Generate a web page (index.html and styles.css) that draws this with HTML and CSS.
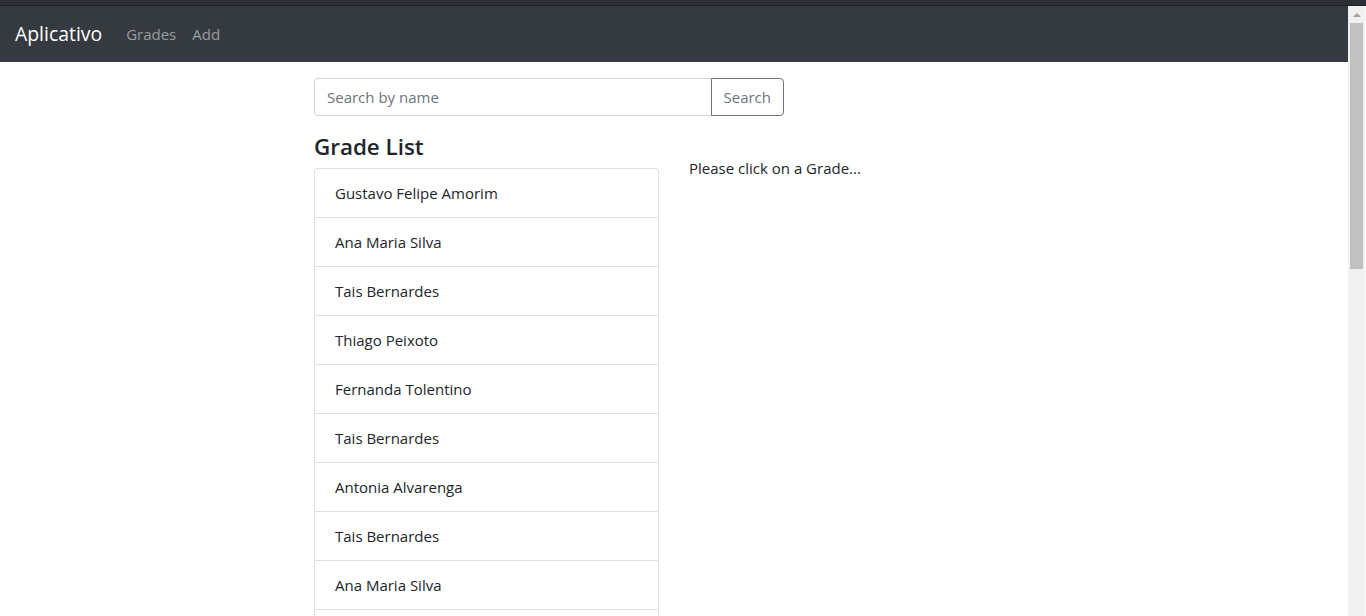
FILE: index.html
```html
<!DOCTYPE html>
<html lang="pt">
<head>
<meta charset="utf-8">
<title>Aplicativo</title>
<link rel="stylesheet" href="styles.css">
</head>
<body>
<div class="chrome-strip"></div>
<div class="viewport">
  <div class="page">
    <nav class="navbar">
      <a class="brand" href="#">Aplicativo</a>
      <a class="nav-link" href="#">Grades</a>
      <a class="nav-link" href="#">Add</a>
    </nav>
    <div class="container">
      <div class="list">
        <div class="col-8">
          <div class="input-group">
            <input class="form-control" type="text" placeholder="Search by name">
            <button class="btn-outline" type="button">Search</button>
          </div>
        </div>
        <div class="col-6">
          <h4 class="title">Grade List</h4>
          <ul class="list-group">
            <li class="list-item">Gustavo Felipe Amorim</li>
            <li class="list-item">Ana Maria Silva</li>
            <li class="list-item">Tais Bernardes</li>
            <li class="list-item">Thiago Peixoto</li>
            <li class="list-item">Fernanda Tolentino</li>
            <li class="list-item">Tais Bernardes</li>
            <li class="list-item">Antonia Alvarenga</li>
            <li class="list-item">Tais Bernardes</li>
            <li class="list-item">Ana Maria Silva</li>
            <li class="list-item">Gustavo Felipe Amorim</li>
          </ul>
        </div>
        <div class="col-6">
          <br>
          <p class="hint">Please click on a Grade...</p>
        </div>
      </div>
    </div>
  </div>
  <div class="scrollbar" aria-hidden="true">
    <div class="sb-button"><span class="sb-arrow"></span></div>
    <div class="sb-thumb"></div>
  </div>
</div>
</body>
</html>
```

FILE: styles.css
```css
* { box-sizing: border-box; }

html, body {
  margin: 0;
  padding: 0;
  height: 100%;
  overflow: hidden;
}

body {
  font-family: "Open Sans", "Noto Sans", "Liberation Sans", sans-serif;
  font-size: 15px;
  line-height: 24px;
  color: #212529;
  background: #fff;
  display: flex;
  flex-direction: column;
}

.chrome-strip {
  height: 6px;
  flex: none;
  background: #2c2f33;
  border-bottom: 1px solid #1f2124;
}

.viewport {
  flex: 1;
  min-height: 0;
  display: flex;
}

.page {
  flex: 1;
  min-width: 0;
  overflow: hidden;
}

.scrollbar {
  flex: 0 0 18px;
  background: #f1f1f1;
  display: flex;
  flex-direction: column;
  align-items: center;
  border-right: 1px solid #fafafa;
}

.sb-button {
  height: 17px;
  width: 100%;
  display: flex;
  align-items: center;
  justify-content: center;
}

.sb-arrow {
  width: 0;
  height: 0;
  border-left: 4px solid transparent;
  border-right: 4px solid transparent;
  border-bottom: 4px solid #a3a3a3;
}

.sb-thumb {
  width: 13px;
  height: 246px;
  background: #c1c1c1;
}

.navbar {
  display: flex;
  align-items: center;
  height: 56px;
  padding: 8px 16px 8px 15px;
  background: #343a40;
}

.brand {
  font-size: 19.4px;
  line-height: 30px;
  color: #fff;
  text-decoration: none;
  margin-right: 16px;
  padding: 5px 0;
}

.nav-link {
  color: rgba(255, 255, 255, 0.5);
  text-decoration: none;
  padding: 8px 8px;
  line-height: 24px;
}

.container {
  margin-top: 16px;
}

.list {
  max-width: 750px;
  margin: 0 auto;
  display: flex;
  flex-wrap: wrap;
}

.col-8 {
  flex: 0 0 66.6667%;
  max-width: 66.6667%;
  padding: 0 15px;
}

.col-6 {
  flex: 0 0 50%;
  max-width: 50%;
  padding: 0 15px;
}

.input-group {
  display: flex;
  margin-bottom: 16px;
}

.form-control {
  flex: 1;
  min-width: 0;
  height: 38px;
  padding: 6px 12px;
  font: inherit;
  color: #495057;
  border: 1px solid #ced4da;
  border-radius: 4px 0 0 4px;
  background: #fff;
  outline: none;
}
.form-control::placeholder {
  color: #6c757d;
}

.btn-outline {
  height: 38px;
  padding: 6px 12px;
  font: inherit;
  color: #6c757d;
  background: transparent;
  border: 1px solid #6c757d;
  border-radius: 0 4px 4px 0;
  margin-left: -1px;
}

.title {
  margin: 0 0 8px;
  padding-top: 2px;
  font-size: 22.4px;
  font-weight: 600;
  line-height: 26px;
}

.list-group {
  list-style: none;
  margin: 0;
  padding: 0;
}

.list-item {
  padding: 12px 20px;
  border: 1px solid rgba(0, 0, 0, 0.125);
  margin-bottom: -1px;
  background: #fff;
}
.list-item:first-child {
  border-top-left-radius: 4px;
  border-top-right-radius: 4px;
}

.hint {
  margin: 0 0 16px;
}
```
